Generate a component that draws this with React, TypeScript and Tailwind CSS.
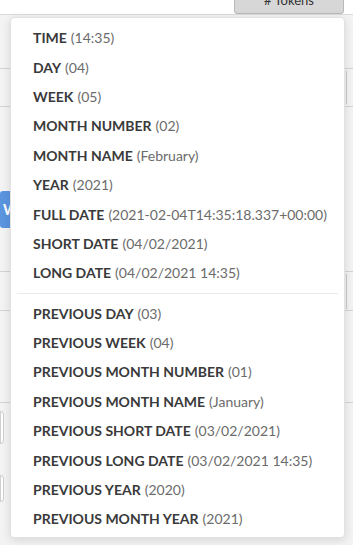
import React from "react";

const first: [string, string][] = [
  ["TIME", "(14:35)"],
  ["DAY", "(04)"],
  ["WEEK", "(05)"],
  ["MONTH NUMBER", "(02)"],
  ["MONTH NAME", "(February)"],
  ["YEAR", "(2021)"],
  ["FULL DATE", "(2021-02-04T14:35:18.337+00:00)"],
  ["SHORT DATE", "(04/02/2021)"],
  ["LONG DATE", "(04/02/2021 14:35)"],
];

const second: [string, string][] = [
  ["PREVIOUS DAY", "(03)"],
  ["PREVIOUS WEEK", "(04)"],
  ["PREVIOUS MONTH NUMBER", "(01)"],
  ["PREVIOUS MONTH NAME", "(January)"],
  ["PREVIOUS SHORT DATE", "(03/02/2021)"],
  ["PREVIOUS LONG DATE", "(03/02/2021 14:35)"],
  ["PREVIOUS YEAR", "(2020)"],
  ["PREVIOUS MONTH YEAR", "(2021)"],
];

function Item({ label, value }: { label: string; value: string }) {
  return (
    <div className="h-[29.4px] flex items-center pl-[22px] whitespace-nowrap">
      <span className="font-bold text-[#3a3a3a]">{label}</span>
      <span className="ml-[4px] text-[#6b6b6b]">{value}</span>
    </div>
  );
}

export default function App() {
  return (
    <div
      className="relative w-[353px] h-[545px] overflow-hidden bg-[#f3f3f3]"
      style={{ fontFamily: "Lato, 'Open Sans', sans-serif" }}
    >
      {/* header */}
      <div className="h-[15px] bg-white border-b border-[#dcdcdc] flex justify-end pr-[9px]">
        <div className="-mt-[13px] h-[27px] w-[110px] bg-[#d7d7d7] border border-[#b9b9b9] rounded-[3px] flex items-center justify-center text-[13px] text-[#333]">
          # Tokens
        </div>
      </div>
      {/* body rows */}
      <div className="flex flex-col">
        <div className="h-[54px] border-b border-[#d4d4d4]" />
        <div className="h-[38px] border-b border-[#d4d4d4] flex justify-end">
          <div className="w-[7px] mt-[2px] h-[33px] border-l border-[#c8c8c8]" />
        </div>
        <div className="h-[84px]" />
        <div className="h-[37px] w-[60px] bg-[#5b95e0] rounded-[3px] flex items-center pl-[3px] text-white text-[15px] font-bold">
          W
        </div>
        <div className="h-[44px] border-b border-[#d4d4d4]" />
        <div className="h-[39px] border-b border-[#d4d4d4] flex justify-end">
          <div className="w-[7px] mt-[2px] h-[35px] border-l border-[#c8c8c8]" />
        </div>
        <div className="h-[92px] border-b border-[#d4d4d4]" />
        <div className="h-[8px]" />
        <div className="h-[33px] w-[4px] border border-[#cfcfcf] rounded-r-[4px] bg-white" />
        <div className="h-[31px]" />
        <div className="h-[27px] w-[4px] border border-[#cfcfcf] rounded-r-[4px] bg-white" />
      </div>

      {/* dropdown menu */}
      <div className="absolute left-[10px] top-[17px] w-[335px] h-[521px] bg-white rounded-[4px] border border-[#e2e2e2] shadow-[0_2px_10px_rgba(0,0,0,0.12)] pt-[5px] text-[14px]">
        {first.map(([l, v]) => (
          <Item key={l} label={l} value={v} />
        ))}
        <div className="mx-[6px] my-[5px] h-px bg-[#e6ecee]" />
        {second.map(([l, v]) => (
          <Item key={l} label={l} value={v} />
        ))}
      </div>
    </div>
  );
}
